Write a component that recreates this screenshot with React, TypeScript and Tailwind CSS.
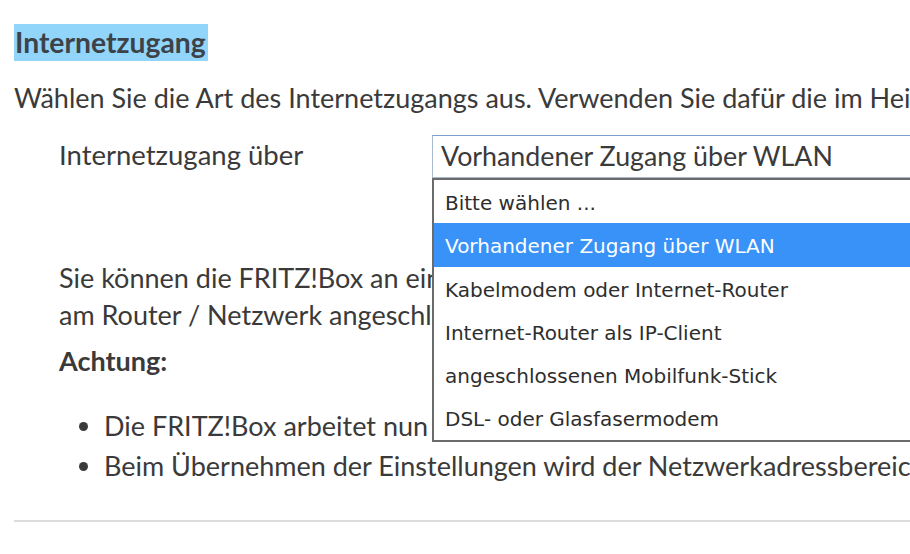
import React from 'react';

const options = [
  'Bitte wählen ...',
  'Vorhandener Zugang über WLAN',
  'Kabelmodem oder Internet-Router',
  'Internet-Router als IP-Client',
  'angeschlossenen Mobilfunk-Stick',
  'DSL- oder Glasfasermodem',
];

const App: React.FC = () => {
  return (
    <div
      className="w-[910px] h-[554px] overflow-hidden bg-white text-[#3a3a3a]"
      style={{ fontFamily: 'Lato, "Open Sans", sans-serif' }}
    >
      <div className="pl-[14px] pt-[24px]">
        <h1 className="inline-block bg-[#92d5fa] pl-[1px] pr-[2px] h-[37px] text-[28.3px] font-bold leading-[37px] text-[#3d4248]">
          Internetzugang
        </h1>

        <p className="mt-[21px] whitespace-nowrap text-[27px] leading-[32px]">
          Wählen Sie die Art des Internetzugangs aus. Verwenden Sie dafür die im Heimnetz vorhandenen Angaben.
        </p>

        <div className="mt-[21px] flex items-start pl-[45px]">
          <div className="w-[373px] pt-[4px] text-[27.5px] leading-[32px]">Internetzugang über</div>
          <div className="relative flex-1">
            <div className="h-[43px] border border-r-0 border-[#a9b8cc] border-t-[#7b9fd0] pl-[8px] text-[26.8px] leading-[40px] whitespace-nowrap">
              Vorhandener Zugang über WLAN
            </div>
            <ul
              className="absolute left-0 top-[43px] z-10 w-[600px] border-2 border-[#6b6b6b] bg-white text-[20px] text-[#2e2e2e]"
              style={{ fontFamily: '"DejaVu Sans", sans-serif' }}
            >
              {options.map((opt, i) => (
                <li
                  key={opt}
                  className={
                    i === 1
                      ? 'h-[43.3px] whitespace-nowrap bg-[#3892f8] pl-[11px] pt-[3px] leading-[41px] text-white'
                      : 'h-[43.3px] whitespace-nowrap pl-[11px] pt-[3px] leading-[41px]'
                  }
                >
                  {opt}
                </li>
              ))}
            </ul>
          </div>
        </div>

        <div className="mt-[81px] pl-[45px] text-[27px]">
          <p className="whitespace-nowrap leading-[37px]">
            Sie können die FRITZ!Box an einen vorhandenen Router anschließen, der bereits
          </p>
          <p className="whitespace-nowrap leading-[37px]">
            am Router / Netzwerk angeschlossen ist.
          </p>
          <p className="mt-[9px] font-bold leading-[37px]">Achtung:</p>
          <ul className="mt-[27px] pl-[19.5px]">
            <li className="flex items-center whitespace-nowrap leading-[40px]">
              <span className="mr-[16.5px] h-[9px] w-[9px] shrink-0 rounded-full bg-[#3a3a3a]" />
              <span>Die FRITZ!Box arbeitet nun als WLAN-Client im vorhandenen Netzwerk.</span>
            </li>
            <li className="flex items-center whitespace-nowrap leading-[40px]">
              <span className="mr-[16.5px] h-[9px] w-[9px] shrink-0 rounded-full bg-[#3a3a3a]" />
              <span>Beim Übernehmen der Einstellungen wird der Netzwerkadressbereich angepasst.</span>
            </li>
          </ul>
        </div>

        <hr className="mt-[34px] border-t-2 border-[#dcdcdc]" />
      </div>
    </div>
  );
};

export default App;
